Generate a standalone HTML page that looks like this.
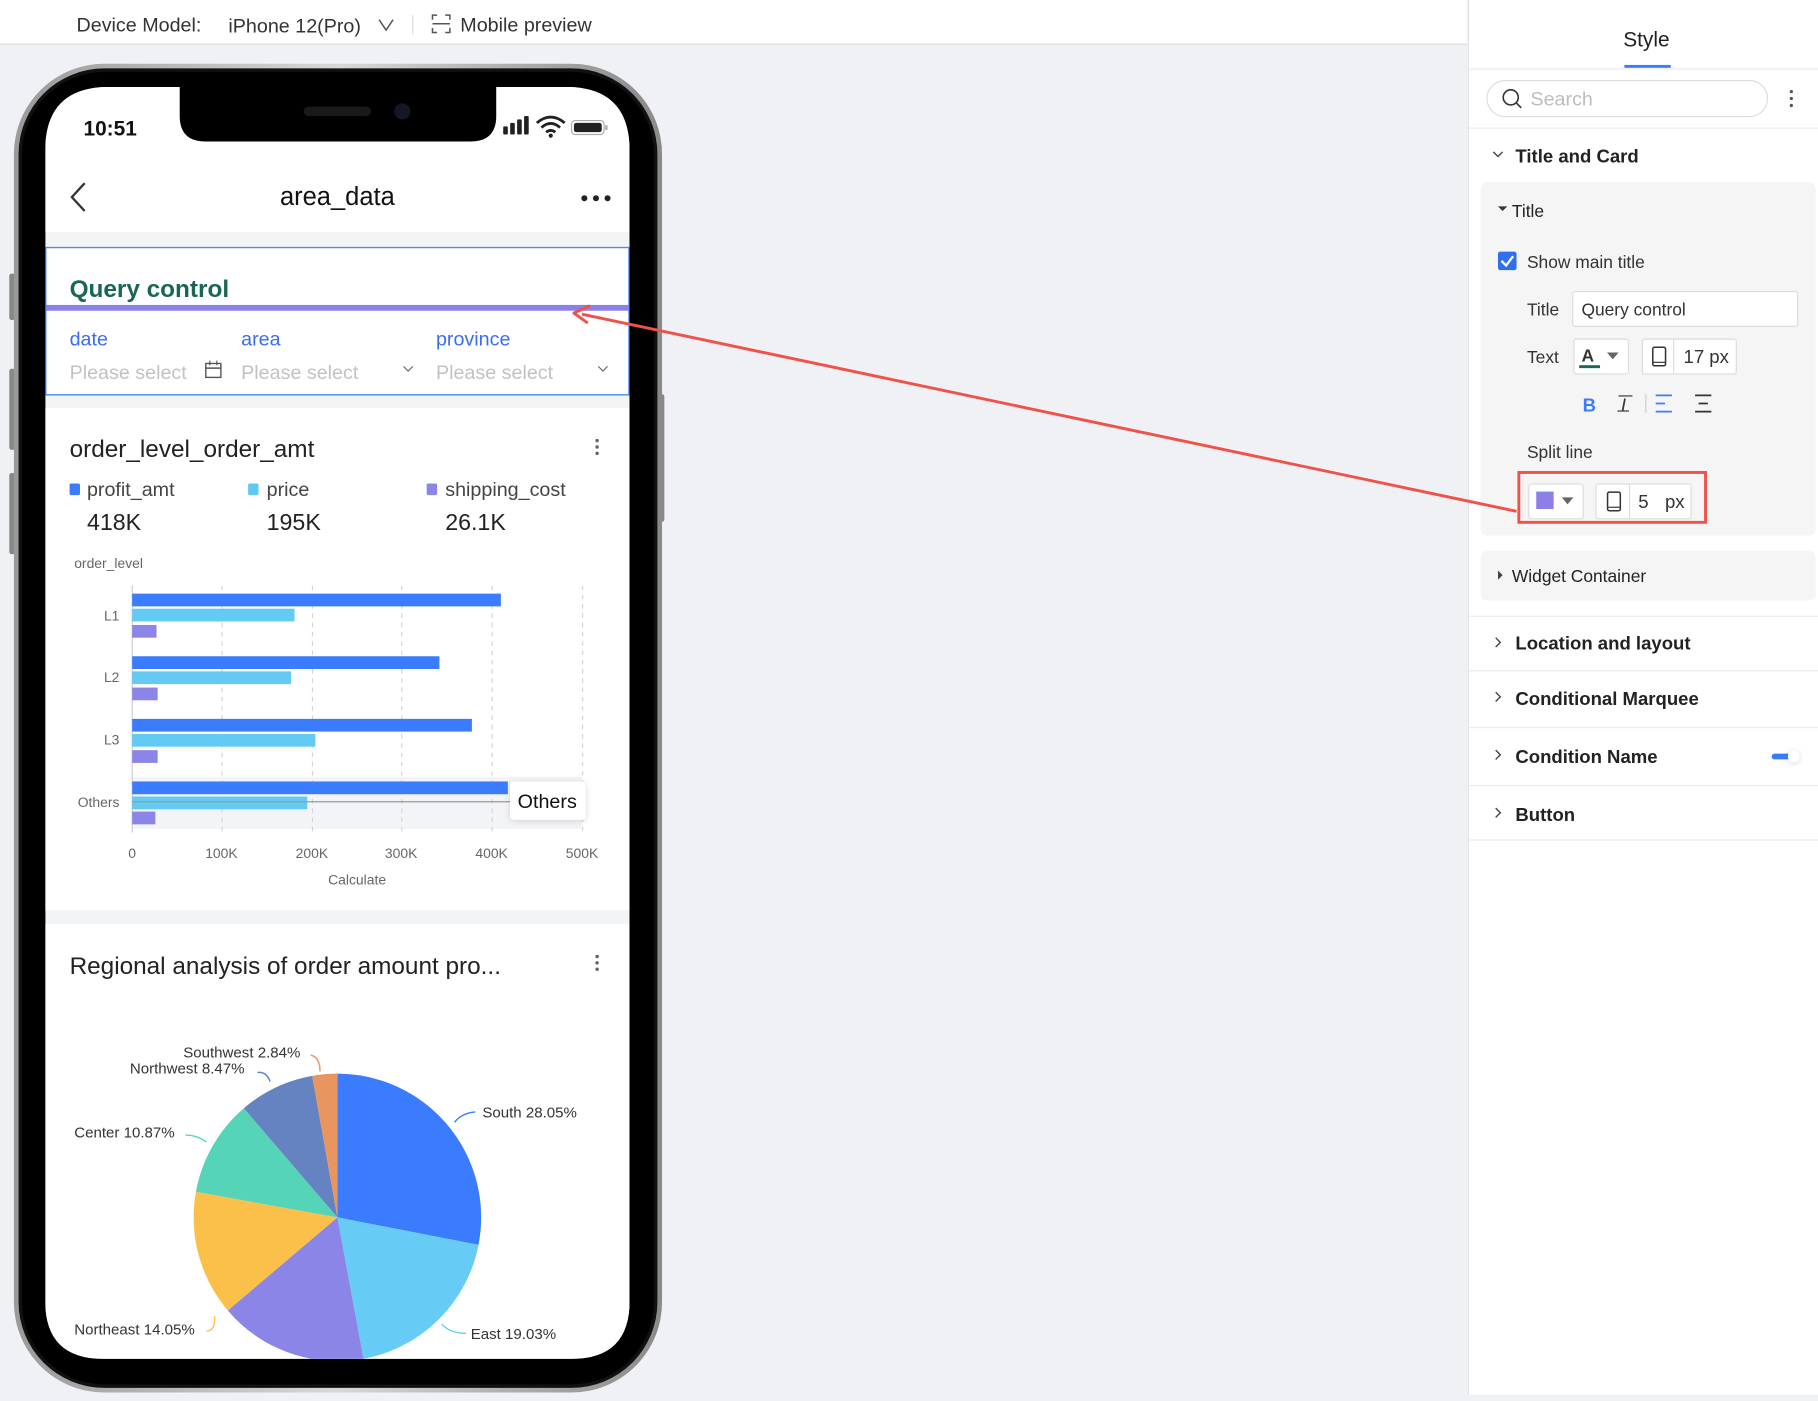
<!DOCTYPE html>
<html><head><meta charset="utf-8"><style>
html,body{margin:0;padding:0;}
body{width:1818px;height:1394px;overflow:hidden;background:#f0f1f4;font-family:"Liberation Sans",Arial,sans-serif;}
#wrap{position:absolute;left:0;top:0;width:1568px;height:1203px;transform:scale(1.15944);transform-origin:0 0;}
svg text{font-family:"Liberation Sans",Arial,sans-serif;}
</style></head><body><div id="wrap">
<svg width="1568" height="1203" viewBox="0 0 1568 1203" xmlns="http://www.w3.org/2000/svg">
<defs>
<clipPath id="scr"><path d="M39 130 Q39 75 94 75 L488 75 Q543 75 543 130 L543 1122 Q543 1172 493 1172 L89 1172 Q39 1172 39 1122 Z"/></clipPath>
<linearGradient id="sil" x1="0" y1="0" x2="1" y2="0"><stop offset="0" stop-color="#9a9a9a"/><stop offset="0.5" stop-color="#d8d8d8"/><stop offset="1" stop-color="#8a8a8a"/></linearGradient>
<filter id="sh" x="-20%" y="-30%" width="140%" height="160%"><feDropShadow dx="0" dy="1" stdDeviation="3" flood-color="#000" flood-opacity="0.15"/></filter>
</defs>
<!-- background -->
<rect x="0" y="0" width="1568" height="1203" fill="#f0f1f4"/>
<!-- top bar -->
<rect x="0" y="0" width="1265" height="38" fill="#fff"/>
<line x1="0" y1="38" x2="1265" y2="38" stroke="#dcdde0"/>
<text x="66" y="27" font-size="17" fill="#333">Device Model:</text>
<text x="197" y="28" font-size="17" fill="#333">iPhone 12(Pro)</text>
<path d="M327 17 L333 26 L339 17" fill="none" stroke="#555" stroke-width="1.3"/>
<line x1="356" y1="13" x2="356" y2="30" stroke="#ddd"/>
<path d="M373 17 V13 H377 M384 13 H388 V17 M388 24 V28 H384 M377 28 H373 V24 M373 20.5 H388" fill="none" stroke="#555" stroke-width="1.3"/>
<text x="397" y="27" font-size="17" fill="#333">Mobile preview</text>

<!-- phone -->
<rect x="8" y="236" width="5" height="40" rx="2" fill="#888"/>
<rect x="8" y="318" width="5" height="70" rx="2" fill="#888"/>
<rect x="8" y="408" width="5" height="70" rx="2" fill="#888"/>
<rect x="568" y="340" width="5" height="110" rx="2" fill="#888"/>
<rect x="12" y="55" width="559" height="1146" rx="78" fill="url(#sil)"/>
<rect x="16" y="59" width="551" height="1138" rx="74" fill="#111"/>
<rect x="19" y="62" width="545" height="1132" rx="71" fill="#000"/>
<g clip-path="url(#scr)">
<rect x="39" y="75" width="504" height="1100" fill="#f3f4f6"/>
<rect x="39" y="75" width="504" height="125" fill="#fff"/>
<!-- notch -->
<path d="M155 75 L428 75 L428 100 Q428 122 406 122 L177 122 Q155 122 155 100 Z" fill="#000"/>
<rect x="262" y="92" width="58" height="8" rx="4" fill="#1a1a1a"/>
<circle cx="347" cy="96" r="7" fill="#141824"/>
<text x="72" y="117" font-size="18" font-weight="bold" fill="#111">10:51</text>
<rect x="434" y="109" width="4" height="7" rx="1" fill="#222"/>
<rect x="440" y="106" width="4" height="10" rx="1" fill="#222"/>
<rect x="446" y="103" width="4" height="13" rx="1" fill="#222"/>
<rect x="452" y="100" width="4" height="16" rx="1" fill="#222"/>
<path d="M463 106 Q475 96 487 106 M467 110 Q475 103 483 110 M471 114 Q475 111 479 114" fill="none" stroke="#222" stroke-width="2.4"/>
<circle cx="475" cy="117" r="1.8" fill="#222"/>
<rect x="493" y="104" width="28" height="12" rx="3" fill="none" stroke="#aaa" stroke-width="1"/>
<rect x="495" y="106" width="24" height="8" rx="2" fill="#222"/>
<rect x="522" y="108" width="2" height="4" fill="#aaa"/>
<path d="M73 158 L62 170 L73 182" fill="none" stroke="#333" stroke-width="2"/>
<text x="291" y="177" font-size="22" fill="#111" text-anchor="middle">area_data</text>
<circle cx="504" cy="171" r="2.6" fill="#222"/><circle cx="514" cy="171" r="2.6" fill="#222"/><circle cx="524" cy="171" r="2.6" fill="#222"/>

<!-- query card -->
<rect x="39.5" y="213.5" width="503" height="127" fill="#fff" stroke="#4a8af4" stroke-width="1.2"/>
<text x="60" y="256" font-size="21" font-weight="bold" fill="#1a6655">Query control</text>
<rect x="40" y="263" width="502" height="5" fill="#8a80e8"/>
<text x="60" y="298" font-size="17" fill="#3a6df0">date</text>
<text x="208" y="298" font-size="17" fill="#3a6df0">area</text>
<text x="376" y="298" font-size="17" fill="#3a6df0">province</text>
<text x="60" y="327" font-size="17" fill="#c2c2c2">Please select</text>
<text x="208" y="327" font-size="17" fill="#c2c2c2">Please select</text>
<text x="376" y="327" font-size="17" fill="#c2c2c2">Please select</text>
<rect x="177.5" y="313.5" width="13" height="12" fill="none" stroke="#555" stroke-width="1.2"/>
<line x1="177" y1="317.5" x2="191" y2="317.5" stroke="#555" stroke-width="1.2"/>
<line x1="181" y1="311" x2="181" y2="315" stroke="#555"/><line x1="187" y1="311" x2="187" y2="315" stroke="#555"/>
<path d="M348 316 L352 320 L356 316" fill="none" stroke="#666" stroke-width="1"/>
<path d="M516 316 L520 320 L524 316" fill="none" stroke="#666" stroke-width="1"/>

<!-- bar chart card -->
<rect x="39" y="352" width="504" height="433" fill="#fff"/>
<text x="60" y="394" font-size="21" fill="#222">order_level_order_amt</text>
<circle cx="515" cy="380" r="1.5" fill="#666"/><circle cx="515" cy="385.5" r="1.5" fill="#666"/><circle cx="515" cy="391" r="1.5" fill="#666"/>
<rect x="60" y="417" width="9" height="10" rx="1.5" fill="#3b7cff"/>
<text x="75" y="428" font-size="17" fill="#444">profit_amt</text>
<rect x="214" y="417" width="9" height="10" rx="1.5" fill="#5ec8f2"/>
<text x="230" y="428" font-size="17" fill="#444">price</text>
<rect x="368" y="417" width="9" height="10" rx="1.5" fill="#8b85e8"/>
<text x="384" y="428" font-size="17" fill="#444">shipping_cost</text>
<text x="75" y="457" font-size="20" fill="#222">418K</text>
<text x="230" y="457" font-size="20" fill="#222">195K</text>
<text x="384" y="457" font-size="20" fill="#222">26.1K</text>
<text x="64" y="490" font-size="12" fill="#666">order_level</text>
<rect x="114" y="670" width="388" height="45" fill="#f3f4f8"/>
<g stroke="#d4d4d4" stroke-dasharray="4 4">
<line x1="191.5" y1="505" x2="191.5" y2="718"/><line x1="269.5" y1="505" x2="269.5" y2="718"/><line x1="346.5" y1="505" x2="346.5" y2="718"/><line x1="424.5" y1="505" x2="424.5" y2="718"/><line x1="502.5" y1="505" x2="502.5" y2="718"/>
</g>
<line x1="114" y1="505" x2="114" y2="718" stroke="#ccc"/>
<g>
<rect x="114" y="512" width="318" height="11" fill="#3b7cff"/><rect x="114" y="525" width="140" height="11" fill="#63cbf3"/><rect x="114" y="539" width="21" height="11" fill="#8b85e8"/>
<rect x="114" y="566" width="265" height="11" fill="#3b7cff"/><rect x="114" y="579" width="137" height="11" fill="#63cbf3"/><rect x="114" y="593" width="22" height="11" fill="#8b85e8"/>
<rect x="114" y="620" width="293" height="11" fill="#3b7cff"/><rect x="114" y="633" width="158" height="11" fill="#63cbf3"/><rect x="114" y="647" width="22" height="11" fill="#8b85e8"/>
<rect x="114" y="674" width="324" height="11" fill="#3b7cff"/><rect x="114" y="687" width="151" height="11" fill="#63cbf3"/><rect x="114" y="700" width="20" height="11" fill="#8b85e8"/>
</g>
<line x1="114" y1="691.5" x2="442" y2="691.5" stroke="#999" stroke-width="1"/>
<rect x="440" y="674" width="65" height="33" rx="3" fill="#fff" filter="url(#sh)"/>
<text x="472" y="697" font-size="17" fill="#111" text-anchor="middle">Others</text>
<g font-size="12" fill="#666" text-anchor="end">
<text x="103" y="535">L1</text><text x="103" y="588">L2</text><text x="103" y="642">L3</text><text x="103" y="696">Others</text>
</g>
<g font-size="12" fill="#666" text-anchor="middle">
<text x="114" y="740">0</text><text x="191" y="740">100K</text><text x="269" y="740">200K</text><text x="346" y="740">300K</text><text x="424" y="740">400K</text><text x="502" y="740">500K</text>
<text x="308" y="763">Calculate</text>
</g>

<!-- pie card -->
<rect x="39" y="797" width="504" height="400" fill="#fff"/>
<text x="60" y="840" font-size="21" fill="#222">Regional analysis of order amount pro...</text>
<circle cx="515" cy="825" r="1.5" fill="#666"/><circle cx="515" cy="830.5" r="1.5" fill="#666"/><circle cx="515" cy="836" r="1.5" fill="#666"/>
<g transform="rotate(-90 291 1050)" fill="none" stroke-width="124">
<circle cx="291" cy="1050" r="62" stroke="#3b7cff" stroke-dasharray="109.27 389.56" stroke-dashoffset="0"/>
<circle cx="291" cy="1050" r="62" stroke="#66ccf5" stroke-dasharray="74.13 389.56" stroke-dashoffset="-109.27"/>
<circle cx="291" cy="1050" r="62" stroke="#8b85e8" stroke-dasharray="65.02 389.56" stroke-dashoffset="-183.40"/>
<circle cx="291" cy="1050" r="62" stroke="#fbc04a" stroke-dasharray="54.73 389.56" stroke-dashoffset="-248.42"/>
<circle cx="291" cy="1050" r="62" stroke="#55d4b8" stroke-dasharray="42.34 389.56" stroke-dashoffset="-303.15"/>
<circle cx="291" cy="1050" r="62" stroke="#6583c0" stroke-dasharray="33.00 389.56" stroke-dashoffset="-345.49"/>
<circle cx="291" cy="1050" r="62" stroke="#e8955f" stroke-dasharray="11.06 389.56" stroke-dashoffset="-378.49"/>
</g>
<g fill="none" stroke-width="1.2">
<path d="M392 968 Q398 960 410 959" stroke="#3b7cff"/>
<path d="M381 1142 Q388 1150 402 1150" stroke="#66ccf5"/>
<path d="M185 1135 Q186 1148 178 1148" stroke="#fbc04a"/>
<path d="M178 985 Q170 979 160 979" stroke="#55d4b8"/>
<path d="M233 933 Q230 924 222 925" stroke="#6583c0"/>
<path d="M276 924 Q276 912 268 910" stroke="#e8955f"/>
</g>
<g font-size="13" fill="#333">
<text x="158" y="912">Southwest 2.84%</text>
<text x="112" y="926">Northwest 8.47%</text>
<text x="64" y="981">Center 10.87%</text>
<text x="416" y="964">South 28.05%</text>
<text x="64" y="1151">Northeast 14.05%</text>
<text x="406" y="1155">East 19.03%</text>
</g>
</g>

<!-- right panel -->
<rect x="1266" y="0" width="302" height="1203" fill="#fff"/>
<line x1="1266.5" y1="0" x2="1266.5" y2="1203" stroke="#e3e4e8"/>
<text x="1420" y="40" font-size="18" fill="#222" text-anchor="middle">Style</text>
<rect x="1401" y="56" width="40" height="2.5" fill="#3b7cff"/>
<line x1="1267" y1="59.5" x2="1568" y2="59.5" stroke="#ececec"/>
<rect x="1282.5" y="69.5" width="242" height="31" rx="15.5" fill="#fff" stroke="#dcdcdc"/>
<circle cx="1303" cy="84" r="6.5" fill="none" stroke="#333" stroke-width="1.4"/>
<line x1="1308" y1="89" x2="1312" y2="93" stroke="#333" stroke-width="1.4"/>
<text x="1320" y="91" font-size="17" fill="#bdbdbd">Search</text>
<circle cx="1545" cy="79" r="1.4" fill="#555"/><circle cx="1545" cy="85" r="1.4" fill="#555"/><circle cx="1545" cy="91" r="1.4" fill="#555"/>
<line x1="1267" y1="110.5" x2="1568" y2="110.5" stroke="#ececec"/>
<path d="M1288 131 L1292 135 L1296 131" fill="none" stroke="#444" stroke-width="1.2"/>
<text x="1307" y="140" font-size="16" font-weight="bold" fill="#222">Title and Card</text>
<rect x="1277" y="157" width="289" height="305" rx="6" fill="#f5f5f5"/>
<path d="M1292 178 L1300 178 L1296 182 Z" fill="#333"/>
<text x="1304" y="187" font-size="15" fill="#222">Title</text>
<rect x="1292" y="217" width="16" height="16" rx="2" fill="#2f6ff0"/>
<path d="M1295 225 L1299 229 L1305 221" fill="none" stroke="#fff" stroke-width="2"/>
<text x="1317" y="231" font-size="15" fill="#333">Show main title</text>
<text x="1317" y="272" font-size="15" fill="#333">Title</text>
<rect x="1356.5" y="251.5" width="194" height="30" rx="2" fill="#fff" stroke="#dcdcdc"/>
<text x="1364" y="272" font-size="15" fill="#333">Query control</text>
<text x="1317" y="313" font-size="15" fill="#333">Text</text>
<rect x="1357.5" y="292.5" width="47" height="30" rx="2" fill="#fff" stroke="#dcdcdc"/>
<text x="1364" y="312" font-size="15" font-weight="bold" fill="#333">A</text>
<rect x="1362" y="315" width="18" height="2.5" fill="#1a6655"/>
<path d="M1386 304 L1396 304 L1391 310 Z" fill="#666"/>
<rect x="1416.5" y="292.5" width="81" height="30" rx="2" fill="#fff" stroke="#dcdcdc"/>
<line x1="1443.5" y1="293" x2="1443.5" y2="322" stroke="#dcdcdc"/>
<rect x="1425.5" y="299.5" width="11" height="16" rx="1.5" fill="none" stroke="#333" stroke-width="1.3"/>
<line x1="1426" y1="312.5" x2="1436" y2="312.5" stroke="#333"/>
<text x="1452" y="313" font-size="16" fill="#333">17 px</text>
<text x="1365" y="355" font-size="16" font-weight="bold" fill="#3b7cff">B</text>
<text x="1398" y="355" font-size="16" font-style="italic" fill="#333">I</text>
<line x1="1396" y1="341.5" x2="1408" y2="341.5" stroke="#333"/><line x1="1395" y1="354.5" x2="1405" y2="354.5" stroke="#333"/>
<line x1="1419.5" y1="340" x2="1419.5" y2="356" stroke="#ccc"/>
<g stroke="#3b7cff" stroke-width="1.5"><line x1="1428" y1="341" x2="1442" y2="341"/><line x1="1428" y1="348" x2="1436" y2="348"/><line x1="1428" y1="355" x2="1442" y2="355"/></g>
<g stroke="#333" stroke-width="1.5"><line x1="1462" y1="341" x2="1476" y2="341"/><line x1="1465" y1="348" x2="1473" y2="348"/><line x1="1462" y1="355" x2="1476" y2="355"/></g>
<text x="1317" y="395" font-size="15" fill="#333">Split line</text>
<rect x="1318.5" y="417.5" width="47" height="30" rx="2" fill="#fff" stroke="#dcdcdc"/>
<rect x="1325" y="424" width="15" height="15" fill="#8a80e8"/>
<path d="M1347 429 L1357 429 L1352 435 Z" fill="#666"/>
<rect x="1376.5" y="417.5" width="82" height="30" rx="2" fill="#fff" stroke="#dcdcdc"/>
<line x1="1405.5" y1="418" x2="1405.5" y2="447" stroke="#dcdcdc"/>
<rect x="1386.5" y="424.5" width="11" height="16" rx="1.5" fill="none" stroke="#333" stroke-width="1.3"/>
<line x1="1387" y1="437.5" x2="1397" y2="437.5" stroke="#333"/>
<text x="1413" y="438" font-size="16" fill="#333">5</text>
<text x="1436" y="438" font-size="16" fill="#333">px</text>
<rect x="1310" y="407.5" width="161" height="43" fill="none" stroke="#f0524a" stroke-width="2.5"/>
<rect x="1277" y="475" width="289" height="43" rx="6" fill="#f5f5f5"/>
<path d="M1292 492 L1296 496 L1292 500 Z" fill="#444"/>
<text x="1304" y="502" font-size="15" fill="#222">Widget Container</text>
<line x1="1267" y1="531.5" x2="1568" y2="531.5" stroke="#ececec"/>
<g fill="none" stroke="#444" stroke-width="1.2">
<path d="M1290 550 L1294 554 L1290 558"/><path d="M1290 597 L1294 601 L1290 605"/><path d="M1290 647 L1294 651 L1290 655"/><path d="M1290 697 L1294 701 L1290 705"/>
</g>
<g font-size="16" font-weight="bold" fill="#222">
<text x="1307" y="560">Location and layout</text>
<text x="1307" y="608">Conditional Marquee</text>
<text x="1307" y="658">Condition Name</text>
<text x="1307" y="708">Button</text>
</g>
<line x1="1267" y1="578.5" x2="1568" y2="578.5" stroke="#ececec"/>
<line x1="1267" y1="627.5" x2="1568" y2="627.5" stroke="#ececec"/>
<line x1="1267" y1="677.5" x2="1568" y2="677.5" stroke="#ececec"/>
<line x1="1267" y1="724.5" x2="1568" y2="724.5" stroke="#ececec"/>
<rect x="1528" y="650" width="20" height="5" rx="2.5" fill="#3b7cff"/>
<circle cx="1547" cy="652.5" r="5" fill="#fff" filter="url(#sh)"/>

<!-- red arrow -->
<line x1="1308" y1="441" x2="502" y2="271" stroke="#f0524a" stroke-width="2.5"/>
<path d="M495 270 L508 264 M495 270 L506 278" fill="none" stroke="#f0524a" stroke-width="2.5" stroke-linecap="round"/>
</svg>
</div></body></html>
